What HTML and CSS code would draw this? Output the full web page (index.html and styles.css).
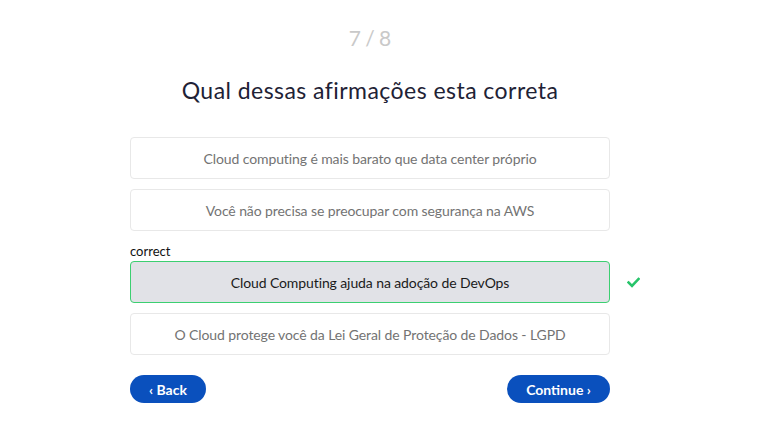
FILE: index.html
```html
<!DOCTYPE html>
<html lang="pt">
<head>
<meta charset="utf-8">
<link rel="stylesheet" href="styles.css">
</head>
<body>
<div class="page">
  <div class="counter">7 / 8</div>
  <h1 class="title">Qual dessas afirmações esta correta</h1>
  <div class="options">
    <div class="option">Cloud computing é mais barato que data center próprio</div>
    <div class="option">Você não precisa se preocupar com segurança na AWS</div>
    <div class="label">correct</div>
    <div class="option option-correct">Cloud Computing ajuda na adoção de DevOps
      <svg class="check" width="13" height="11" viewBox="0 0 13 11"><path d="M1.5 5.5 L5 9 L11.5 2" fill="none" stroke="#27c46a" stroke-width="2.6" stroke-linecap="square"/></svg>
    </div>
    <div class="option">O Cloud protege você da Lei Geral de Proteção de Dados - LGPD</div>
  </div>
  <div class="nav">
    <button class="btn btn-back">‹ Back</button>
    <button class="btn btn-next">Continue ›</button>
  </div>
</div>
</body>
</html>
```
FILE: styles.css
```css
html, body {
  margin: 0;
  padding: 0;
  background: #fff;
}
body {
  font-family: Lato, "Open Sans", sans-serif;
}
.page {
  width: 740px;
  display: flex;
  flex-direction: column;
  align-items: center;
}
.counter {
  margin-top: 24px;
  font-size: 21px;
  line-height: 28px;
  color: #c9c9c9;
  word-spacing: -1px;
}
.title {
  margin: 23px 0 0;
  font-size: 23px;
  line-height: 30px;
  font-weight: 400;
  color: #1e2235;
  letter-spacing: 0.45px;
}
.options {
  margin-top: 32px;
  width: 480px;
  display: flex;
  flex-direction: column;
}
.option {
  position: relative;
  box-sizing: border-box;
  height: 42px;
  border: 1px solid #e8e8e8;
  border-radius: 4px;
  display: flex;
  align-items: center;
  justify-content: center;
  font-size: 14px;
  letter-spacing: -0.1px;
  color: #737373;
  margin-bottom: 10px;
}
.option-correct {
  background: #e1e2e7;
  border-color: #3ccf71;
  color: #1a1a1a;
}
.check {
  position: absolute;
  left: 496px;
  top: 15px;
}
.label {
  font-size: 13px;
  line-height: 20px;
  color: #111;
}
.nav {
  width: 480px;
  margin-top: 10px;
  display: flex;
  justify-content: space-between;
}
.btn {
  height: 28px;
  border: none;
  border-radius: 14px;
  background: #0a50bd;
  color: #fff;
  font-family: Lato, sans-serif;
  font-weight: 700;
  font-size: 14px;
  padding: 0;
  cursor: pointer;
}
.btn-back {
  width: 76px;
}
.btn-next {
  width: 103px;
}
```
